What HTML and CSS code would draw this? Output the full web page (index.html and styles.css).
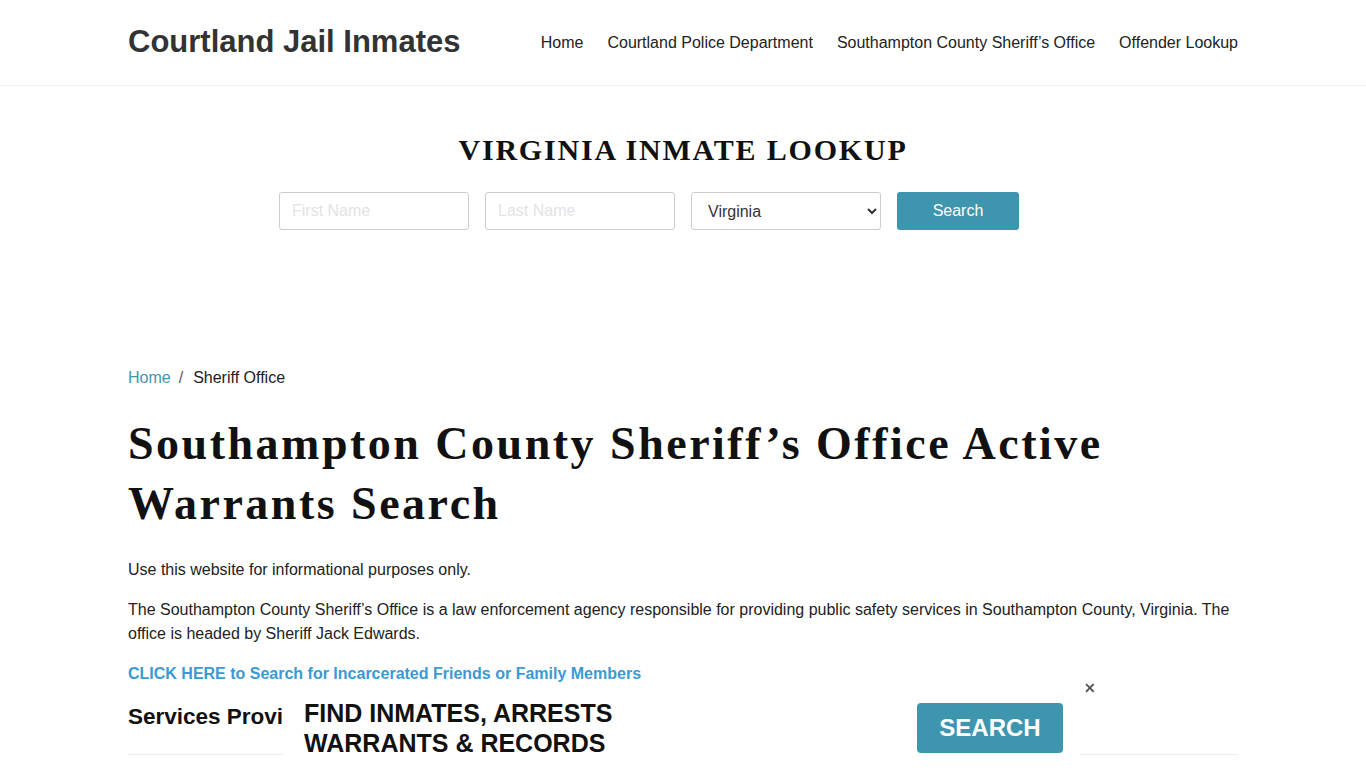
FILE: index.html
```html
<!DOCTYPE html>
<html lang="en">
<head>
<meta charset="utf-8">
<title>Southampton County Sheriff's Office Active Warrants Search</title>
<link rel="stylesheet" href="styles.css">
</head>
<body>
<header class="site-header">
  <div class="container header-inner">
    <a class="logo" href="#">Courtland Jail Inmates</a>
    <nav class="main-nav">
      <a href="#">Home</a>
      <a href="#">Courtland Police Department</a>
      <a href="#">Southampton County Sheriff’s Office</a>
      <a href="#">Offender Lookup</a>
    </nav>
  </div>
</header>

<section class="lookup">
  <div class="container">
    <h2 class="lookup-title">VIRGINIA INMATE LOOKUP</h2>
    <form class="lookup-form">
      <input class="field" type="text" placeholder="First Name">
      <input class="field" type="text" placeholder="Last Name">
      <select class="field select">
        <option>Virginia</option>
      </select>
      <button class="btn" type="button">Search</button>
    </form>
  </div>
</section>

<main class="container content">
  <div class="breadcrumb">
    <a href="#">Home</a><span class="sep">/</span><span class="current">Sheriff Office</span>
  </div>
  <h1 class="page-title">Southampton County Sheriff’s Office Active Warrants Search</h1>
  <p>Use this website for informational purposes only.</p>
  <p>The Southampton County Sheriff’s Office is a law enforcement agency responsible for providing public safety services in Southampton County, Virginia. The office is headed by Sheriff Jack Edwards.</p>
  <p><a class="cta-link" href="#">CLICK HERE to Search for Incarcerated Friends or Family Members</a></p>
  <h3 class="section-title">Services Provided by the Southampton County Sheriff’s Office</h3>
  <hr class="divider">
</main>

<div class="ad-bar">
  <div class="ad-text">FIND INMATES, ARRESTS<br>WARRANTS &amp; RECORDS</div>
  <a class="ad-btn" href="#">SEARCH</a>
  <span class="ad-close">✕</span>
</div>
</body>
</html>
```

FILE: styles.css
```css
* { box-sizing: border-box; }
html, body { margin: 0; padding: 0; }
body {
  font-family: "Liberation Sans", Arial, sans-serif;
  font-size: 16px;
  line-height: 24px;
  color: #222;
  background: #fff;
  overflow: hidden;
  height: 768px;
}
a { text-decoration: none; }
.container {
  width: 1110px;
  margin: 0 auto;
}
.site-header {
  border-bottom: 1px solid #f0f0f0;
}
.header-inner {
  height: 85px;
  display: flex;
  align-items: center;
  justify-content: space-between;
}
.logo {
  font-size: 31px;
  font-weight: bold;
  color: #333;
  margin-top: -1px;
}
.main-nav {
  display: flex;
  gap: 24px;
}
.main-nav a {
  color: #222;
  font-size: 16px;
}
.lookup {
  padding-top: 46px;
  height: 280px;
}
.lookup-title {
  margin: 0;
  text-align: center;
  font-family: "Liberation Serif", "Times New Roman", serif;
  font-weight: bold;
  font-size: 30px;
  line-height: 36px;
  letter-spacing: 1.8px;
  color: #111;
}
.lookup-form {
  display: flex;
  gap: 16px;
  margin-top: 24px;
  padding-left: 151px;
}
.field {
  width: 190px;
  height: 38px;
  border: 1px solid #ccc;
  border-radius: 3px;
  padding: 0 12px;
  font-family: "Liberation Sans", Arial, sans-serif;
  font-size: 16px;
  color: #333;
  background: #fff;
}
.field::placeholder { color: #e3e3e3; }
.select { padding-left: 12px; }
.btn {
  width: 122px;
  height: 38px;
  border: 0;
  border-radius: 3px;
  background: #3e96ae;
  color: #fff;
  font-family: "Liberation Sans", Arial, sans-serif;
  font-size: 16px;
}
.breadcrumb {
  height: 24px;
  margin-bottom: 24px;
}
.breadcrumb a { color: #3e96ae; }
.breadcrumb .sep { color: #555; padding: 0 10px 0 8px; }
.breadcrumb .current { color: #222; }
.page-title {
  margin: 0 0 24px;
  font-family: "Liberation Serif", "Times New Roman", serif;
  font-weight: bold;
  font-size: 46px;
  line-height: 60px;
  letter-spacing: 2.5px;
  color: #111;
}
p { margin: 0 0 16px; }
.cta-link {
  color: #3a9ad3;
  font-weight: bold;
}
.section-title {
  margin: 17px 0 0;
  font-size: 22.5px;
  line-height: 28px;
  font-weight: bold;
  color: #111;
  white-space: nowrap;
}
.divider {
  border: 0;
  border-top: 1px solid #eee;
  margin: 23px 0 0;
}
.ad-bar {
  position: fixed;
  left: 283px;
  bottom: 0;
  width: 797px;
  height: 70px;
  background: #fff;
  display: flex;
  align-items: center;
  padding-left: 21px;
}
.ad-text {
  font-size: 25px;
  line-height: 30px;
  font-weight: bold;
  color: #111;
  width: 613px;
  margin-top: -10px;
}
.ad-btn {
  width: 146px;
  height: 50px;
  border-radius: 4px;
  background: #3e96ae;
  color: #fff;
  font-size: 24px;
  font-weight: bold;
  display: flex;
  align-items: center;
  justify-content: center;
  margin-top: -10px;
}
.ad-close {
  position: absolute;
  left: 801px;
  top: -22px;
  font-size: 14px;
  color: #555;
  font-weight: bold;
}
```
